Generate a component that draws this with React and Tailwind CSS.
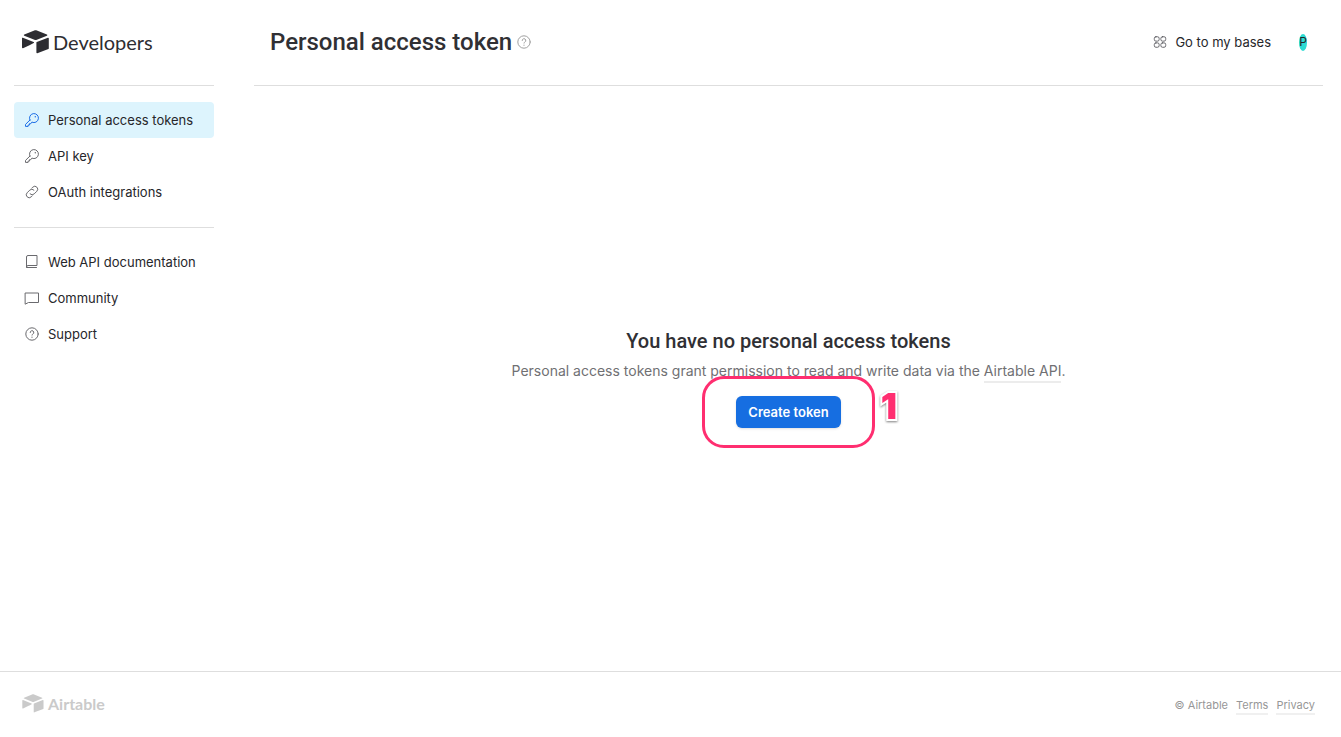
import React from "react";

function Svg({ className = "", size = 16, children }) {
  return (
    <svg
      className={`shrink-0 ${className}`}
      width={size}
      height={size}
      viewBox="0 0 16 16"
      fill="none"
      stroke="currentColor"
      strokeWidth="1"
      strokeLinecap="round"
      strokeLinejoin="round"
      aria-hidden="true"
    >
      {children}
    </svg>
  );
}

const KeyIcon = (p) => (
  <Svg {...p}>
    <path d="M5.9 8.1 1.500 12.400v2h2.600v-1.300h1.300v-1.400h1.400L7.900 10.100A4.500 4.500 0 1 0 5.900 8.100Z" />
    <circle cx="11.300" cy="4.700" r="0.700" fill="currentColor" stroke="none" />
  </Svg>
);

const LinkIcon = (p) => (
  <Svg {...p}>
    <path d="M6.1 9.9a2.9 2.9 0 0 0 4.1 0l2.7-2.7a2.9 2.9 0 0 0-4.1-4.1l-1 1" />
    <path d="M9.9 6.1a2.9 2.9 0 0 0-4.1 0L3.1 8.8a2.9 2.9 0 0 0 4.1 4.1l1-1" />
  </Svg>
);

const BookIcon = (p) => (
  <Svg {...p}>
    <path d="M2.500 13v-10a1.500 1.500 0 0 1 1.500-1.500h9v10h-9A1.500 1.500 0 0 0 2.500 13Z" />
    <path d="M2.500 13v.500h10" />
  </Svg>
);

const ChatIcon = (p) => (
  <Svg {...p}>
    <path d="M1.500 3h13v9.500H4.500L1.500 14Z" />
  </Svg>
);

const HelpIcon = (p) => (
  <Svg {...p}>
    <circle cx="8" cy="8" r="6.2" />
    <path d="M6.2 6.5a1.8 1.8 0 1 1 2.6 1.6c-.5.3-.8.5-.8 1" />
    <circle cx="8" cy="11.2" r="0.6" fill="currentColor" stroke="none" />
  </Svg>
);

const BasesIcon = (p) => (
  <Svg {...p}>
    <rect x="1.500" y="2" width="5.500" height="5" rx="1.800" />
    <rect x="9" y="2" width="5.500" height="5" rx="1.800" />
    <rect x="1.500" y="9" width="5.500" height="5" rx="1.800" />
    <rect x="9" y="9" width="5.500" height="5" rx="1.800" />
  </Svg>
);

function Mark({ className }) {
  return (
    <svg className={className} viewBox="0 0 27 24" fill="currentColor" aria-hidden="true">
      <path d="M12.3.5 2.3 4.6c-.6.2-.6 1 0 1.200l10.100 4c.8.3 1.700.3 2.500 0l10-4c.6-.2.6-1 0-1.200L14.900.5c-.8-.3-1.800-.3-2.600 0Z" />
      <path d="M14.400 12.600v10c0 .5.500.8.9.6l11.100-4.300c.3-.1.4-.3.4-.6v-10c0-.5-.5-.8-.9-.6L14.800 12c-.3.100-.4.300-.4.600Z" />
      <path d="m11.700 13.100-3.300 1.600-.4.200-7 3.300c-.4.200-1-.1-1-.6V8.300c0-.2.100-.4.200-.5.300-.2.500-.2.700-.1l10.700 4.200c.6.300.6 1 .1 1.200Z" />
    </svg>
  );
}

function NavItem({ icon: Icon, active, children }) {
  return (
    <li>
      <a
        href="#"
        aria-current={active ? "page" : undefined}
        className={`flex h-9 items-center gap-2 rounded-sm px-2.5 text-[13px] leading-5 ${
          active ? "bg-[#ddf4fd]" : ""
        }`}
      >
        <Icon className={active ? "text-[#1d6ee6]" : "text-[#6a6a6e]"} />
        {children}
      </a>
    </li>
  );
}

export default function App() {
  return (
    <div className="flex min-h-screen flex-col bg-white font-['Inter',sans-serif] text-[#26262a]">
      <div className="flex flex-1">
        <aside className="ml-3.5 w-[200px] shrink-0">
          <a href="#" className="flex h-[85px] items-center gap-1 px-2 pb-0.5 text-[#2d2d32]">
            <Mark className="h-6 w-[27px]" />
            <span className="font-['Lato',sans-serif] text-xl leading-6">Developers</span>
          </a>
          <nav aria-label="Developer hub">
            <ul className="border-y border-[#dedede] pt-4 pb-[17px]">
              <NavItem icon={KeyIcon} active>Personal access tokens</NavItem>
              <NavItem icon={KeyIcon}>API key</NavItem>
              <NavItem icon={LinkIcon}>OAuth integrations</NavItem>
            </ul>
            <ul className="py-4">
              <NavItem icon={BookIcon}>Web API documentation</NavItem>
              <NavItem icon={ChatIcon}>Community</NavItem>
              <NavItem icon={HelpIcon}>Support</NavItem>
            </ul>
          </nav>
        </aside>

        <div className="ml-10 mr-[18px] flex flex-1 flex-col">
          <header className="flex h-[86px] items-center border-b border-[#dedede] px-4 pb-px">
            <h1 className="font-['Roboto',sans-serif] text-2xl font-medium text-[#303034]">Personal access token</h1>
            <button type="button" aria-label="Help" className="ml-1 text-[#a0a0a0]">
              <HelpIcon />
            </button>
            <a href="#" className="ml-auto flex items-center gap-2 text-[13px] leading-5">
              <BasesIcon size={14} className="text-[#55555a]" />
              Go to my bases
            </a>
            <button
              type="button"
              aria-label="Account"
              className="ml-7 flex h-[17px] w-2 items-center justify-center rounded-[50%] bg-[#2ddbd2] text-xs"
            >
              P
            </button>
          </header>

          <main className="flex flex-1 flex-col items-center justify-center pb-1">
            <h2 className="font-['Roboto',sans-serif] text-xl font-medium leading-8 text-[#303034]">
              You have no personal access tokens
            </h2>
            <p className="mt-1 text-sm leading-5 text-[#707073]">
              Personal access tokens grant permission to read and write data via the{" "}
              <a href="#" className="border-b-2 border-[#ececec] pb-0.5">Airtable API</a>.
            </p>
            <div className="relative mt-[15px]">
              <button
                type="button"
                className="h-8 rounded-md bg-[#166ee1] px-3 text-[13px] leading-5 font-semibold text-white shadow-sm"
              >
                Create token
              </button>
              <div className="pointer-events-none absolute -inset-x-[34px] -inset-y-5 rounded-[22px] border-3 border-[#ff2e70]" />
              <span className="pointer-events-none absolute left-full -top-2 ml-10 text-4xl leading-9 font-black text-[#ff2e70] [-webkit-text-stroke:4px_white] [paint-order:stroke_fill] drop-shadow-[0_1px_1px_rgba(0,0,0,0.5)]">
                1
              </span>
            </div>
          </main>
        </div>
      </div>

      <footer className="flex h-[66px] items-center justify-between border-t border-[#dedede] pl-[22px] pr-[26px]">
        <a href="#" className="flex items-center gap-1 pb-0.5 text-[#cacaca]">
          <Mark className="h-[19px] w-[22px]" />
          <span className="font-['Lato',sans-serif] text-base leading-5 font-bold">Airtable</span>
        </a>
        <div className="flex gap-2 pt-0.5 text-[11px] leading-4 text-[#979797]">
          <span>© Airtable</span>
          <a href="#" className="border-b-2 border-[#f0f0f0]">Terms</a>
          <a href="#" className="border-b-2 border-[#f0f0f0]">Privacy</a>
        </div>
      </footer>
    </div>
  );
}
